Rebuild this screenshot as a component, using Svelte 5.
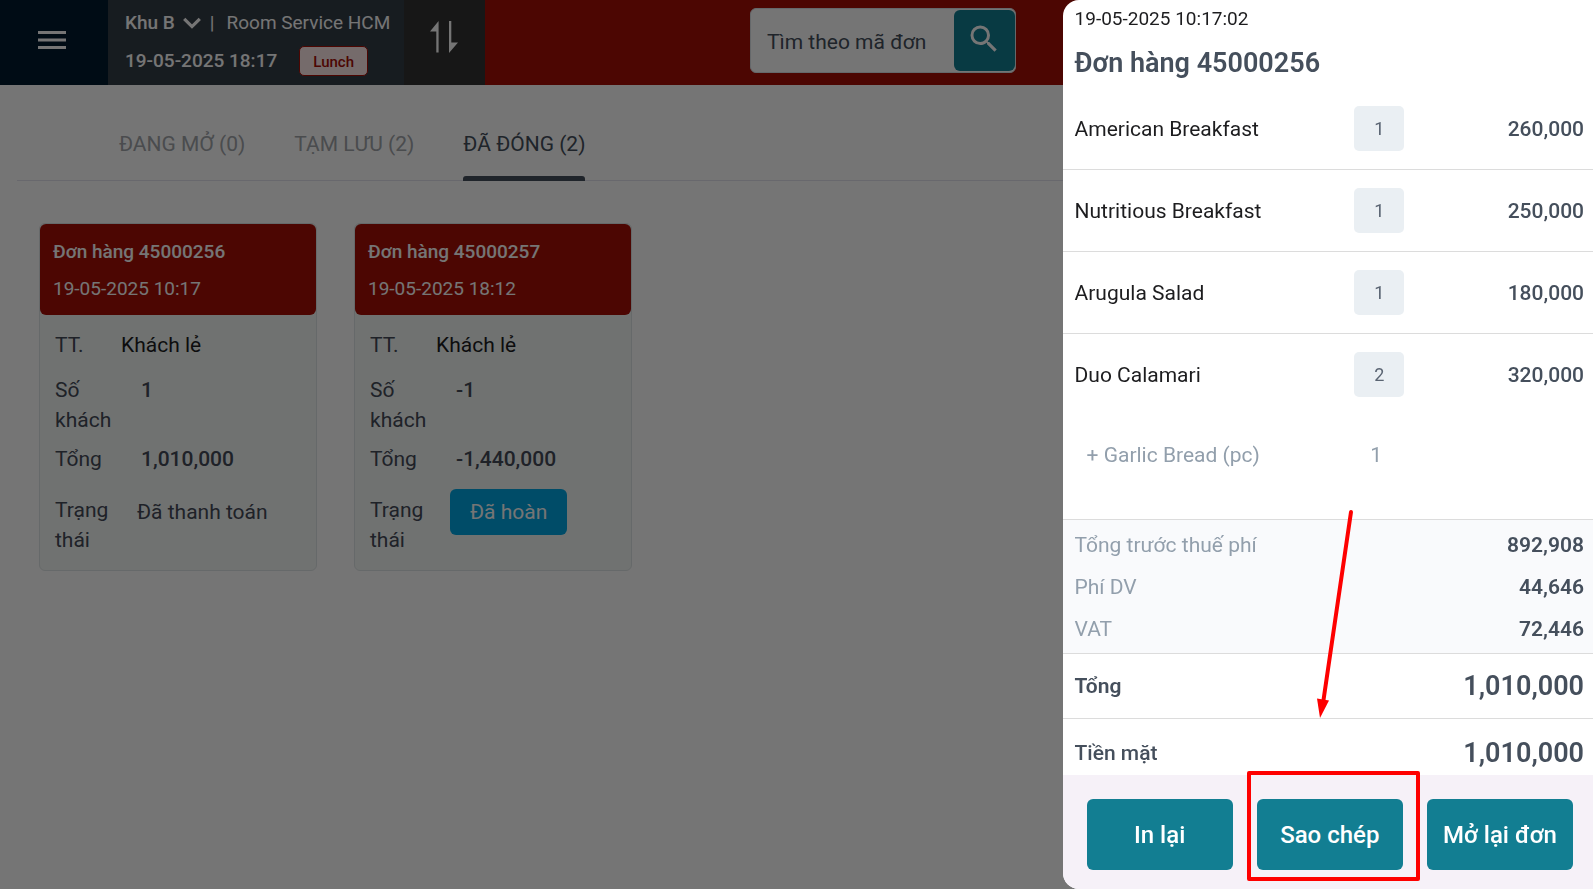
<script>
  const tabs = [
    { label: 'ĐANG MỞ (0)', active: false },
    { label: 'TẠM LƯU (2)', active: false },
    { label: 'ĐÃ ĐÓNG (2)', active: true }
  ];

  const orders = [
    { code: '45000256', time: '19-05-2025 10:17', guest: 'Khách lẻ', pax: '1', total: '1,010,000', status: 'Đã thanh toán', refunded: false },
    { code: '45000257', time: '19-05-2025 18:12', guest: 'Khách lẻ', pax: '-1', total: '-1,440,000', status: 'Đã hoàn', refunded: true }
  ];

  const items = [
    { name: 'American Breakfast', qty: 1, price: '260,000', extras: [] },
    { name: 'Nutritious Breakfast', qty: 1, price: '250,000', extras: [] },
    { name: 'Arugula Salad', qty: 1, price: '180,000', extras: [] },
    { name: 'Duo Calamari', qty: 2, price: '320,000', extras: [{ name: 'Garlic Bread (pc)', qty: 1 }] }
  ];

  const charges = [
    { label: 'Tổng trước thuế phí', value: '892,908' },
    { label: 'Phí DV', value: '44,646' },
    { label: 'VAT', value: '72,446' }
  ];
</script>

<div class="page">
  <header class="topbar">
    <button class="menu" aria-label="Menu">
      <svg width="28" height="18" viewBox="0 0 28 18"><path d="M0 0h28v3H0zM0 7.5h28v3H0zM0 15h28v3H0z" fill="currentColor" /></svg>
    </button>
    <div class="outlet">
      <div class="outlet-line">
        <button class="area">
          Khu B
          <svg width="18" height="12" viewBox="0 0 18 12"><path d="M1.2 1.8 9 9.6l7.800-7.800" fill="none" stroke="currentColor" stroke-width="3.200" /></svg>
        </button>
        <span class="bar">|</span>
        <span>Room Service HCM</span>
      </div>
      <div class="outlet-line">
        <time class="strong">19-05-2025 18:17</time>
        <span class="meal">Lunch</span>
      </div>
    </div>
    <button class="swap" aria-label="Sort">
      <svg width="28" height="32" viewBox="0 0 28 32"><path d="M0 10.500 8.600 0v31.500H6.300V10.500zM19 0h2.300v21.500H28L19 32z" fill="currentColor" /></svg>
    </button>
    <form class="search">
      <input type="text" placeholder="Tìm theo mã đơn" aria-label="Tìm theo mã đơn" />
      <button type="button" aria-label="Search">
        <svg width="36" height="36" viewBox="0 0 24 24"><path d="M15.500 14h-.79l-.28-.27A6.471 6.471 0 0 0 16 9.500 6.500 6.500 0 1 0 9.500 16c1.610 0 3.090-.59 4.230-1.570l.27.28v.79l5 4.990L20.490 19l-4.990-5zm-6 0C7.010 14 5 11.990 5 9.500S7.010 5 9.500 5 14 7.010 14 9.500 11.990 14 9.500 14z" fill="currentColor" /></svg>
      </button>
    </form>
  </header>

  <nav class="tabs">
    {#each tabs as tab}
      <button class="tab" class:active={tab.active}>{tab.label}</button>
    {/each}
  </nav>

  <main class="orders">
    {#each orders as order}
      <article class="card">
        <header>
          <h2>Đơn hàng {order.code}</h2>
          <time>{order.time}</time>
        </header>
        <dl>
          <div class="row guest"><dt>TT.</dt><dd>{order.guest}</dd></div>
          <div class="row pax"><dt>Số khách</dt><dd>{order.pax}</dd></div>
          <div class="row sum"><dt>Tổng</dt><dd>{order.total}</dd></div>
          <div class="row status">
            <dt>Trạng thái</dt>
            <dd><span class:refunded={order.refunded}>{order.status}</span></dd>
          </div>
        </dl>
      </article>
    {/each}
  </main>
</div>

<div class="scrim"></div>

<aside class="drawer">
  <div class="head">
    <time>19-05-2025 10:17:02</time>
    <h1>Đơn hàng 45000256</h1>
  </div>

  <table>
    <tbody>
      {#each items as item}
        <tr class="item" class:open={item.extras.length > 0}>
          <td class="name">{item.name}</td>
          <td class="qty"><span>{item.qty}</span></td>
          <td class="price">{item.price}</td>
        </tr>
        {#each item.extras as extra}
          <tr class="extra">
            <td class="name">+ {extra.name}</td>
            <td class="qty">{extra.qty}</td>
            <td></td>
          </tr>
        {/each}
      {/each}
    </tbody>
  </table>

  <div class="charges">
    {#each charges as charge}
      <div class="charge"><span>{charge.label}</span><strong>{charge.value}</strong></div>
    {/each}
  </div>

  <div class="grand"><strong>Tổng</strong><strong class="amount">1,010,000</strong></div>
  <div class="grand cash"><span>Tiền mặt</span><strong class="amount">1,010,000</strong></div>

  <footer>
    <button>In lại</button>
    <div class="marked">
      <button>Sao chép</button>
      <svg class="arrow" width="40" height="212" viewBox="0 0 40 212">
        <path d="M34 4 6.500 192" fill="none" stroke="#fe0000" stroke-width="4" stroke-linecap="round" />
        <path d="M0 190.500 12 192.500 3 210z" fill="#fe0000" />
      </svg>
    </div>
    <button>Mở lại đơn</button>
  </footer>
</aside>

<style>
  :global(body) {
    margin: 0;
    background: #fff;
    font-family: Roboto, 'Noto Sans', sans-serif;
    font-size: 21px;
    line-height: 30px;
    color: #454f5c;
  }

  button,
  input {
    font: inherit;
    color: inherit;
    border: 0;
    padding: 0;
    background: none;
  }

  h1, h2, dl, dd {
    margin: 0;
  }

  svg {
    display: block;
  }

  strong {
    font-weight: 600;
  }

  .page {
    min-height: 100vh;
    background: #fff;
  }

  .topbar {
    display: flex;
    height: 85px;
    background: #a60e06;
    color: #fff;
  }

  .menu {
    width: 108px;
    padding: 0 38px 5px;
    background: #001b2e;
  }

  .outlet {
    box-sizing: border-box;
    width: 296px;
    padding: 8px 0 0 17px;
    background: #343d47;
    font-size: 19px;
    display: flex;
    flex-direction: column;
    gap: 8px;
  }

  .outlet-line {
    display: flex;
    align-items: center;
    height: 30px;
    white-space: nowrap;
  }

  .area {
    display: flex;
    align-items: center;
    gap: 8px;
    font-weight: 500;
  }

  .bar {
    padding: 0 12px 0 9px;
  }

  .strong {
    font-weight: 500;
  }

  .meal {
    box-sizing: border-box;
    height: 30px;
    margin-left: auto;
    margin-right: 36px;
    padding: 0 13px;
    border: 1px solid #a60e06;
    border-radius: 5px;
    background: #ffe9e9;
    color: #a60e06;
    font-size: 15px;
    font-weight: 500;
    line-height: 30px;
  }

  .swap {
    width: 81px;
    padding: 0 26px 12px;
    background: #333;
  }

  .search {
    box-sizing: border-box;
    display: flex;
    width: 266px;
    height: 65px;
    margin: 8px 0 0 265px;
    padding: 1px 0;
    border: 1px solid #dde2e8;
    border-radius: 6px;
    background: #fff;
  }

  .search input {
    flex: 1;
    min-width: 0;
    padding: 3px 0 0 16px;
    color: #454f5c;
  }

  .search input::placeholder {
    color: #454f5c;
    opacity: 1;
  }

  .search button {
    width: 61px;
    padding: 0 12px 4px;
    border-radius: 6px;
    background: #127e92;
    color: #fff;
  }

  .tabs {
    display: flex;
    gap: 49px;
    height: 95px;
    margin-left: 17px;
    padding-left: 102px;
    border-bottom: 1px solid #e2e2ee;
  }

  .tab {
    position: relative;
    padding-top: 22px;
    color: #a2a5aa;
    white-space: nowrap;
  }

  .tab.active {
    color: #454f5c;
  }

  .tab.active::after {
    content: '';
    position: absolute;
    left: 0;
    right: 0;
    bottom: -1px;
    height: 5px;
    border-radius: 3px 3px 0 0;
    background: #454f5c;
  }

  .orders {
    display: flex;
    flex-wrap: wrap;
    gap: 37px;
    padding: 42px 39px;
  }

  .card {
    box-sizing: border-box;
    width: 278px;
    border: 1px solid #dfe4e6;
    border-radius: 6px;
    background: #f3f9f7;
  }

  .card header {
    display: flex;
    flex-direction: column;
    gap: 7px;
    padding: 13px 13px 11px;
    border-radius: 6px;
    background: #a60e06;
    color: #fff;
    font-size: 19px;
  }

  .card h2 {
    font-size: 19px;
    font-weight: 500;
  }

  dl {
    padding: 15px;
  }

  .row {
    display: grid;
    grid-template-columns: 66px 1fr;
    color: #454a58;
  }

  .row dd {
    padding-left: 20px;
    font-weight: 500;
    white-space: nowrap;
  }

  .row.guest dd {
    padding-left: 0;
    font-weight: 400;
    color: #1d1d1f;
  }

  .row.pax {
    margin: 15px 0 9px;
  }

  .row.status {
    margin-top: 21px;
  }

  .row.status dd {
    padding-left: 16px;
    font-weight: 400;
    padding-top: 2px;
  }

  .refunded {
    display: inline-block;
    margin: -9px 0 0 -2px;
    padding: 8px 20px;
    border-radius: 6px;
    background: #00a5e2;
    color: #fff;
  }

  .scrim {
    position: fixed;
    inset: 0;
    background: rgba(0, 0, 0, 0.54);
  }

  .drawer {
    position: fixed;
    top: 0;
    right: 0;
    bottom: 0;
    width: 33.3%;
    display: flex;
    flex-direction: column;
    overflow: hidden;
    border-radius: 16px 0 0 16px;
    background: #fff;
  }

  .head {
    padding: 4px 12px 5px;
    color: #1d1d1f;
    font-size: 19px;
  }

  .head time {
    display: block;
  }

  h1 {
    margin-top: 9px;
    color: #454f5c;
    font-size: 27px;
    font-weight: 600;
    line-height: 40px;
  }

  table {
    width: 100%;
    border-collapse: collapse;
  }

  td {
    padding: 0;
  }

  .item td {
    height: 81px;
    border-bottom: 1px solid #dcdcdc;
  }

  .item.open td {
    height: 81px;
    border-bottom: 0;
  }

  .name {
    width: 55%;
    padding-left: 12px;
    box-sizing: border-box;
    color: #1d1d1f;
  }

  .qty span {
    display: block;
    width: 50px;
    border-radius: 5px;
    background: #eaeff3;
    color: #5a6472;
    font-size: 18px;
    line-height: 45px;
    text-align: center;
  }

  .price {
    padding-right: 9px;
    text-align: right;
    font-weight: 500;
  }

  .extra td {
    height: 104px;
    padding-bottom: 24px;
    box-sizing: border-box;
    color: #929fac;
  }

  .extra .name {
    padding-left: 24px;
  }

  .extra .qty {
    padding-left: 16px;
  }

  .charges {
    padding: 4px 9px 3px 12px;
    border-top: 1px solid #dcdcdc;
    border-bottom: 1px solid #dcdcdc;
    background: #f9fafc;
  }

  .charge {
    display: flex;
    justify-content: space-between;
    line-height: 42px;
    color: #929fac;
  }

  .charge strong {
    color: #454f5c;
  }

  .grand {
    display: flex;
    align-items: center;
    justify-content: space-between;
    height: 64px;
    padding: 0 9px 0 12px;
    border-bottom: 1px solid #dcdcdc;
  }

  .cash {
    height: auto;
    flex: 1;
    padding-top: 12px;
    border: 0;
    font-weight: 500;
  }

  .amount {
    font-size: 27px;
  }

  footer {
    display: flex;
    gap: 24px;
    padding: 24px 20px 19px 24px;
    background: #f6f1f8;
  }

  footer > * {
    flex: 1;
  }

  footer button {
    height: 71px;
    border-radius: 6px;
    background: #127e92;
    color: #fff;
    font-size: 24px;
    font-weight: 500;
    white-space: nowrap;
  }

  .marked {
    position: relative;
    display: flex;
  }

  .marked button {
    flex: 1;
  }

  .marked::after {
    content: '';
    position: absolute;
    inset: -28px -17px -11px -10px;
    border: 4px solid #fe0000;
    border-radius: 2px;
  }

  .arrow {
    position: absolute;
    right: 46px;
    bottom: 150px;
  }
</style>
